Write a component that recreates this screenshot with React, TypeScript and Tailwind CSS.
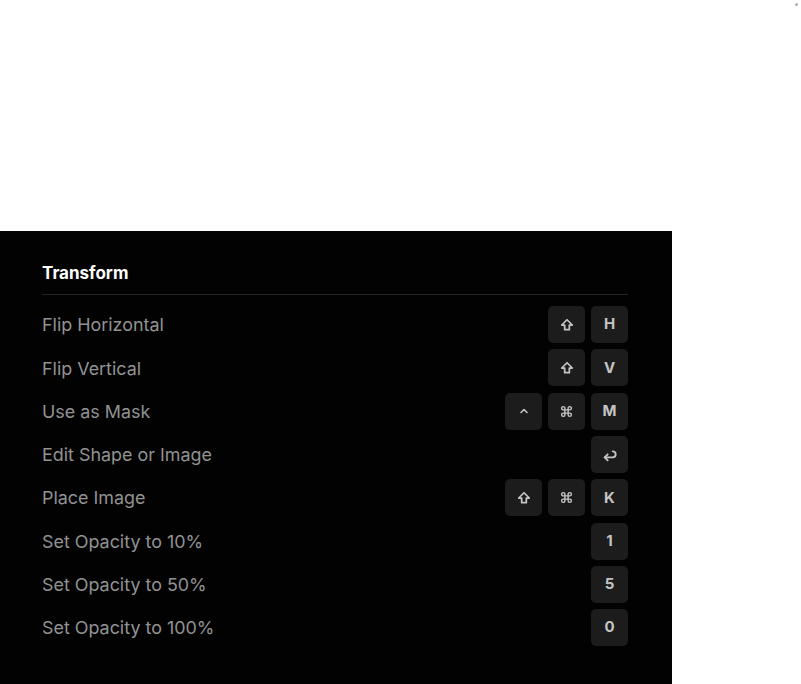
import React from "react";

type KeyT = "shift" | "cmd" | "ctrl" | "enter" | string;

const ShiftIcon = () => (
  <svg width="14" height="14" viewBox="0 0 24 24" fill="none" stroke="currentColor" strokeWidth="3" strokeLinejoin="round">
    <path d="M12 3 L21 12 H16 V20 H8 V12 H3 Z" />
  </svg>
);

const CmdIcon = () => (
  <svg width="13" height="13" viewBox="0 0 24 24" fill="none" stroke="currentColor" strokeWidth="2.6" strokeLinecap="round" strokeLinejoin="round">
    <path d="M15 6v12a3 3 0 1 0 3-3H6a3 3 0 1 0 3 3V6a3 3 0 1 0-3 3h12a3 3 0 1 0-3-3" />
  </svg>
);

const CtrlIcon = () => (
  <svg width="12" height="12" viewBox="0 0 24 24" fill="none" stroke="currentColor" strokeWidth="3.2" strokeLinecap="round" strokeLinejoin="round">
    <path d="M6 15 L12 9 L18 15" />
  </svg>
);

const EnterIcon = () => (
  <svg width="16" height="16" viewBox="0 0 24 24" fill="none" stroke="currentColor" strokeWidth="2.8" strokeLinecap="round" strokeLinejoin="round">
    <path d="M16 6.5 A4.5 4.5 0 0 1 16 15.5 H4" />
    <path d="M8.5 11 L4 15.5 L8.5 20" />
  </svg>
);

function Key({ k }: { k: KeyT }) {
  let content: React.ReactNode = k;
  if (k === "shift") content = <ShiftIcon />;
  else if (k === "cmd") content = <CmdIcon />;
  else if (k === "ctrl") content = <CtrlIcon />;
  else if (k === "enter") content = <EnterIcon />;
  return (
    <div className="flex h-[37px] w-[37px] items-center justify-center rounded-[5px] bg-[#1c1c1c] text-[15px] font-bold text-[#c4c4c4]">
      {content}
    </div>
  );
}

const rows: { label: string; keys: KeyT[] }[] = [
  { label: "Flip Horizontal", keys: ["shift", "H"] },
  { label: "Flip Vertical", keys: ["shift", "V"] },
  { label: "Use as Mask", keys: ["ctrl", "cmd", "M"] },
  { label: "Edit Shape or Image", keys: ["enter"] },
  { label: "Place Image", keys: ["shift", "cmd", "K"] },
  { label: "Set Opacity to 10%", keys: ["1"] },
  { label: "Set Opacity to 50%", keys: ["5"] },
  { label: "Set Opacity to 100%", keys: ["0"] },
];

export default function App() {
  return (
    <div className="relative flex h-[684px] w-[801px] flex-col overflow-hidden bg-white" style={{ fontFamily: "Inter, 'Noto Sans', sans-serif" }}>
      <div className="absolute right-[3px] top-[3px] h-[3px] w-[3px] rounded-full bg-[#b0b0b0]" />
      <div className="h-[231px] shrink-0" />
      <div className="w-[672px] flex-1 bg-[#020202] pl-[42px] pr-[44px]">
        <div className="flex h-[64px] items-end border-b-[1.5px] border-[#262626] pb-[11px]">
          <h2 className="text-[17px] font-bold leading-[20px] text-white">Transform</h2>
        </div>
        <div className="flex flex-col pt-[8px]">
          {rows.map((r) => (
            <div key={r.label} className="flex h-[43.3px] items-center justify-between">
              <span className="pt-[2px] text-[17.9px] text-[#929292]">{r.label}</span>
              <div className="flex gap-[6px]">
                {r.keys.map((k, i) => (
                  <Key key={i} k={k} />
                ))}
              </div>
            </div>
          ))}
        </div>
      </div>
    </div>
  );
}
